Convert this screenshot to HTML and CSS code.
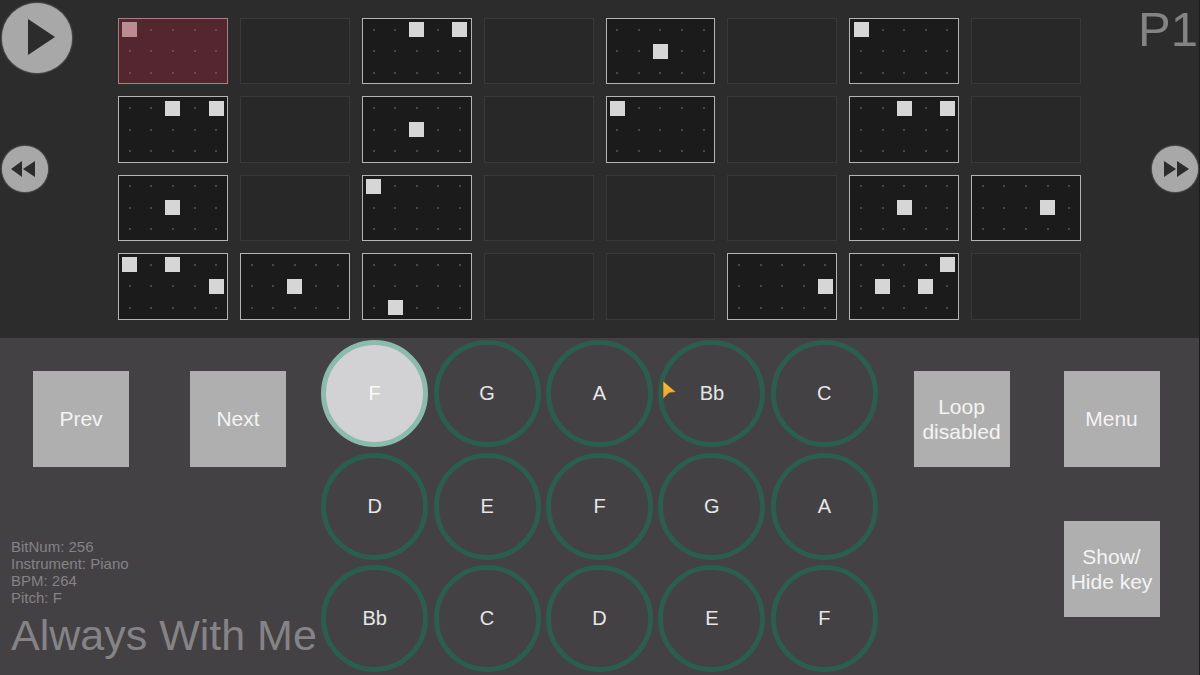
FILE: index.html
```html
<!DOCTYPE html>
<html lang="en">
<head>
    <meta charset="UTF-8">
    <meta name="viewport" content="width=device-width, initial-scale=1.0">
    <title>Always With Me</title>
    <link rel="stylesheet" href="styles.css">
</head>
<body>
    <!-- Score page -->
    <section class="score">
        <div class="side side-left">
            <button class="round-btn play" aria-label="Play">
                <svg viewBox="0 0 70 70"><path d="M26 16 L53 34 L26 52 Z"/></svg>
            </button>
            <button class="round-btn" aria-label="Previous page">
                <svg viewBox="0 0 46 46"><path d="M20 15 V31 L9 23 Z M33 15 V31 L21 23 Z"/></svg>
            </button>
        </div>

        <!-- Filled by script.js -->
        <div class="bars" id="bars"></div>

        <div class="side side-right">
            <div class="page-number">P1</div>
            <button class="round-btn" aria-label="Next page">
                <svg viewBox="0 0 46 46"><path d="M12 15 V31 L24 23 Z M25 15 V31 L37 23 Z"/></svg>
            </button>
        </div>
    </section>

    <!-- Keyboard and controls -->
    <section class="controls">
        <div class="panel panel-left">
            <div class="nav-buttons">
                <button class="square-btn">Prev</button>
                <button class="square-btn">Next</button>
            </div>
            <div class="song">
                <p class="song-info">
                    BitNum: 256<br>
                    Instrument: Piano<br>
                    BPM: 264<br>
                    Pitch: F
                </p>
                <h1 class="song-title">Always With Me</h1>
            </div>
        </div>

        <!-- Filled by script.js -->
        <div class="keys" id="keys"></div>

        <div class="panel panel-right">
            <button class="square-btn">Loop disabled</button>
            <button class="square-btn">Menu</button>
            <button class="square-btn show-keys">Show/<br>Hide key</button>
        </div>
    </section>

    <svg class="cursor" viewBox="0 0 15 20" aria-hidden="true">
        <defs>
            <linearGradient id="cursor-fill" x1="0" y1="0" x2="0" y2="1">
                <stop offset="0" stop-color="#f5c23c"/>
                <stop offset="1" stop-color="#f09a28"/>
            </linearGradient>
        </defs>
        <path d="M1 1 L14 12 L7 13 L1 19 Z" fill="url(#cursor-fill)" stroke="#5c4424" stroke-width="0.6"/>
    </svg>

    <script src="script.js"></script>
</body>
</html>
```

FILE: styles.css
```css
/* Basic styling */
* {
    box-sizing: border-box;
}
body {
    display: grid;
    grid-template-rows: 1fr 1fr;
    min-height: 100vh;
    margin: 0;
    background-color: #1c1c1c;
    color: #e6e6e6;
    font-family: "Liberation Sans", Arial, sans-serif;
}
button {
    padding: 0;
    border: none;
    font-family: inherit;
    color: inherit;
    cursor: pointer;
}

/* Score */
.score {
    display: grid;
    grid-template-columns: 118px 1fr 118px;
    margin-right: 1px;
    background-color: #2c2c2c;
}
.side {
    display: grid;
    grid-template-rows: 1fr auto 1fr;
    align-items: start;
    padding: 3px 2px;
}
.side-right {
    justify-items: end;
    padding-right: 1px;
}
.round-btn {
    width: 46px;
    height: 46px;
    border-radius: 50%;
    background-color: #a8a8a8;
    box-shadow: 0 0 2px #a8a8a8;
}
.round-btn svg {
    display: block;
    fill: #2c2c2c;
}
.play {
    width: 70px;
    height: 70px;
}
.page-number {
    color: #848484;
    font-size: 49px;
    line-height: 52px;
}
.bars {
    display: grid;
    grid-template-columns: repeat(8, 1fr);
    grid-template-rows: repeat(4, 1fr);
    gap: 12px;
    padding: 18px 0;
}

/* One bar is a small copy of the 5x3 keyboard */
.bar {
    display: grid;
    grid-template-columns: repeat(5, 1fr);
    grid-template-rows: repeat(3, 1fr);
    place-items: center;
    border: 1px solid #393939;
    background-color: #282828;
}
.bar.filled {
    border-color: #b4b4b4;
    background-color: #1b1b1b;
}
.bar.current {
    border-color: #b07c84;
    background-color: #54262f;
}
.dot {
    width: 2px;
    height: 2px;
    background-color: #292929;
}
.filled .dot {
    background-color: #484848;
}
.current .dot {
    background-color: #784850;
}
.filled .dot.on {
    width: 15px;
    height: 15px;
    background-color: #d6d6d6;
}
.current .dot.on {
    background-color: #bb8b93;
}

/* Controls */
.controls {
    display: grid;
    grid-template-columns: 1fr 562px 1fr;
    margin-right: 1px;
    background-color: #434144;
}
.panel {
    padding-top: 33px;
}
.panel-left {
    display: flex;
    flex-direction: column;
    justify-content: space-between;
}
.nav-buttons {
    display: flex;
    gap: 61px;
    padding-left: 33px;
}
.square-btn {
    width: 96px;
    height: 96px;
    background-color: #afafaf;
    color: #f4f4f4;
    font-size: 21px;
    line-height: 25px;
}
.panel-right {
    display: grid;
    grid-template-columns: 96px 96px;
    align-content: start;
    gap: 54px;
    padding-left: 33px;
}
.show-keys {
    grid-column: 2;
}
.song {
    padding: 0 0 15px 11px;
    color: #858386;
    white-space: nowrap;
}
.song-info {
    margin: 0;
    font-size: 15px;
    line-height: 17px;
}
.song-title {
    margin: 4px 0 0;
    font-size: 43px;
    font-weight: normal;
    line-height: 50px;
}

/* Keyboard */
.keys {
    display: grid;
    grid-template-columns: repeat(5, 1fr);
    grid-template-rows: repeat(3, 1fr);
    place-items: center;
}
.key {
    width: 107px;
    height: 107px;
    border: 5px solid #2a5e4d;
    border-radius: 50%;
    background-color: transparent;
    font-size: 20px;
}
.key.pressed {
    border-color: #8abcab;
    background-color: #d2d1d3;
    color: #fafafa;
}

.cursor {
    position: absolute;
    top: 380px;
    left: 662px;
    width: 15px;
    height: 20px;
}
```

FILE: script.js
```js
const keyNames = ["F", "G", "A", "Bb", "C", "D", "E", "F", "G", "A", "Bb", "C", "D", "E", "F"];

// Key numbers (0-14) played in each bar
const score = [
    [0], [], [2, 4], [], [7], [], [0], [],
    [2, 4], [], [7], [], [0], [], [2, 4], [],
    [7], [], [0], [], [], [], [7], [8],
    [0, 2, 9], [7], [11], [], [], [9], [4, 6, 8], []
];
const currentBar = 0;

const bars = document.getElementById("bars");
const keys = document.getElementById("keys");

score.forEach((notes, index) => {
    const bar = document.createElement("button");
    bar.className = "bar";
    bar.setAttribute("aria-label", "Bar " + (index + 1));
    if (notes.length > 0) bar.classList.add("filled");
    if (index === currentBar) bar.classList.add("current");

    keyNames.forEach((name, key) => {
        const dot = document.createElement("span");
        dot.className = notes.includes(key) ? "dot on" : "dot";
        bar.appendChild(dot);
    });
    bars.appendChild(bar);
});

keyNames.forEach((name, key) => {
    const button = document.createElement("button");
    button.className = score[currentBar].includes(key) ? "key pressed" : "key";
    button.textContent = name;
    keys.appendChild(button);
});
```
